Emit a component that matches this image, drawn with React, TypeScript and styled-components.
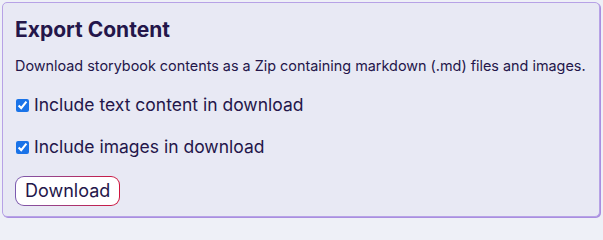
import styled, { createGlobalStyle } from 'styled-components';

const GlobalStyle = createGlobalStyle`
  body {
    margin: 0;
    background: #eef0f7;
    font-family: Inter, "Noto Sans", sans-serif;
  }
`;

const Page = styled.div`
  padding: 2px 3px 4px 2px;
`;

const Card = styled.section`
  display: flex;
  flex-direction: column;
  align-items: flex-start;
  padding: 12px 10px 10px 12px;
  background: #e8e9f4;
  border: 1.5px solid #b7a2e6;
  border-radius: 5px;
  box-shadow: 1px 1px 0 #a98ee0;
  color: #24164a;
  height: 215px;
  box-sizing: border-box;
`;

const Title = styled.h2`
  margin: 0;
  font-size: 21px;
  font-weight: 650;
  line-height: 30px;
`;

const Description = styled.p`
  margin: 11px 0 12px;
  font-size: 14.4px;
  line-height: 20px;
  white-space: nowrap;
`;

const OptionRow = styled.label`
  display: flex;
  align-items: center;
  gap: 5px;
  font-size: 17.5px;
  line-height: 24px;
  margin: 5px 0 13px;
`;

const CheckBox = styled.input`
  width: 13px;
  height: 13px;
  margin: 0 0 0 1px;
  accent-color: #1a73e8;
`;

const DownloadButton = styled.button`
  margin-top: 4px;
  padding: 3px 9px;
  font-family: inherit;
  font-size: 18px;
  line-height: 22px;
  color: #24164a;
  border: 1.5px solid transparent;
  border-radius: 9px;
  background:
    linear-gradient(#fff, #fff) padding-box,
    linear-gradient(90deg, #7b5bb0, #d0143c) border-box;
  cursor: pointer;
`;

const App = () => (
  <>
    <GlobalStyle />
    <Page>
      <Card>
        <Title>Export Content</Title>
        <Description>
          Download storybook contents as a Zip containing markdown (.md) files and images.
        </Description>
        <OptionRow>
          <CheckBox type="checkbox" defaultChecked />
          Include text content in download
        </OptionRow>
        <OptionRow>
          <CheckBox type="checkbox" defaultChecked />
          Include images in download
        </OptionRow>
        <DownloadButton>Download</DownloadButton>
      </Card>
    </Page>
  </>
);

export default App;
